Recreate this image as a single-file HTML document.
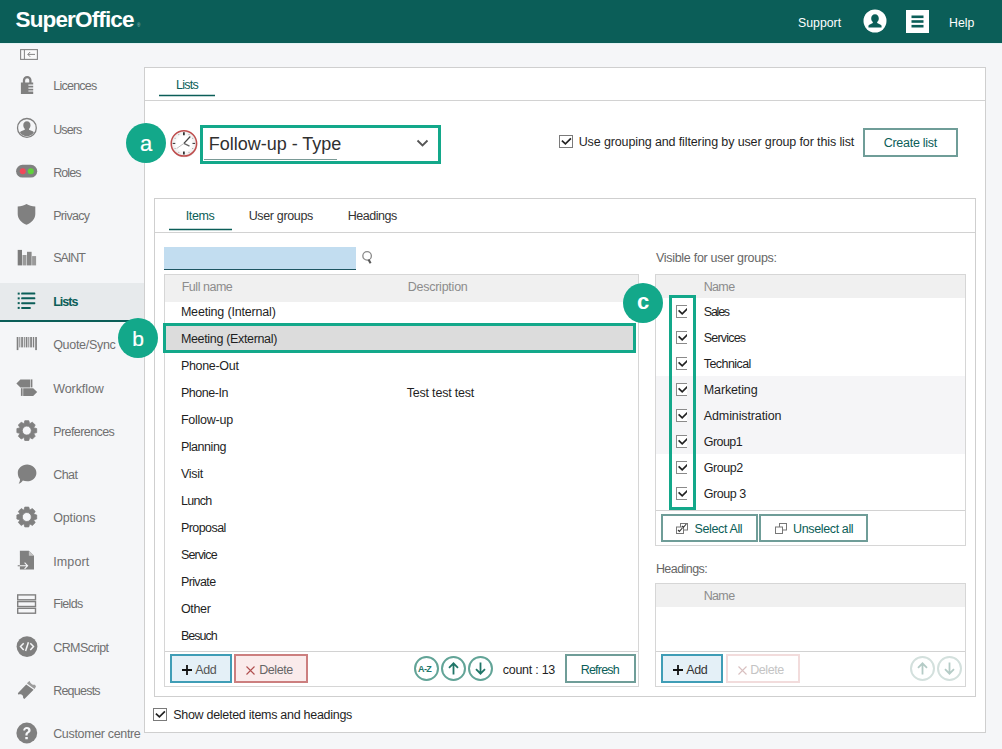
<!DOCTYPE html>
<html><head><meta charset="utf-8"><title>SuperOffice</title>
<style>
*{box-sizing:border-box;margin:0;padding:0}
html,body{width:1002px;height:749px;overflow:hidden;background:#f5f6f8;font-family:"Liberation Sans",sans-serif;font-size:12px;color:#1f1f1f}
div,span,svg{position:absolute}
.t{white-space:nowrap;line-height:16px;font-size:12px}
#hdr{left:0;top:0;width:1002px;height:43px;background:#0b5e58}
#logo{left:15.5px;top:7px;color:#fff;font-size:22.5px;font-weight:bold;line-height:26px;white-space:nowrap;letter-spacing:-.85px}
.hl{color:#fff}
.nav{left:53px;color:#707070}
#sel{left:0;top:283px;width:144px;height:39px;background:#e7eaec;border-bottom:2px solid #0b5e58}
#main{left:144px;top:67px;width:842px;height:666px;background:#fff;border:1px solid #cfcfcf}
.hline{height:1px;background:#d2d2d2}
.ul{height:3px;background:linear-gradient(to bottom,rgba(11,94,88,.25) 0,rgba(11,94,88,.25) 1px,#0b5e58 1px,#0b5e58 2px,rgba(11,94,88,.25) 2px,rgba(11,94,88,.25) 3px)}
#inner{left:154px;top:198px;width:822px;height:499px;background:#fff;border:1px solid #cfcfcf}
.tbl{border:1px solid #d6d6d6;background:#fff}
.th{left:0;top:0;height:23px;background:#f0f0f0}
.thx{color:#8c8c8c}
.btn{border:2px solid #6f9d98;background:#fff;color:#0b5e58}
.cb{width:14px;height:13px;border:1px solid #7a7a7a;background:#fff}
.cb2{width:11px;height:13px;border:1px solid #8a8a8a;border-right:none;background:#fff;overflow:hidden}
.badge{width:40px;height:40px;border-radius:20px;background:#13a88a;color:#fff;text-align:center}
.circ{width:25px;height:25px;border-radius:13px;border:2px solid #62a497;background:#fff}
</style></head><body>
<div style="left:0;top:43px;width:1002px;height:1px;background:#e4f3f4"></div><div id="hdr"><div id="logo">SuperOffice</div><span style="left:137px;top:23px;font-size:4.500px;line-height:5px;color:#9cc4c0">&#174;</span><span class="t hl" style="left:798px;top:15px;font-size:12.300px">Support</span><svg style="left:863px;top:9px" width="24" height="24" viewBox="0 0 24 24"><circle cx="12" cy="12" r="11.500" fill="#fff"/><path fill="#0b5e58" transform="translate(12 12.300) scale(1.150) translate(-12 -11.500)" d="M12 5.300c2 0 3.300 1.500 3.300 3.600 0 1.400-.5 2.600-1.400 3.300v.8l3 1.400c.5.200.8.600.8 1.100v1.300H6.300v-1.300c0-.5.300-.9.800-1.100l3-1.400v-.8c-.9-.7-1.400-1.900-1.400-3.300 0-2.100 1.300-3.600 3.300-3.600z"/></svg><svg style="left:906px;top:10px" width="23" height="23" viewBox="0 0 23 23"><rect width="23" height="23" fill="#fff"/><rect x="5.500" y="5.500" width="12" height="2.600" fill="#0b5e58"/><rect x="5.500" y="10.200" width="12" height="2.600" fill="#0b5e58"/><rect x="5.500" y="14.900" width="12" height="2.600" fill="#0b5e58"/></svg><span class="t hl" style="left:949px;top:15px;font-size:12.300px">Help</span></div>
<div id="sel"></div><svg style="left:20px;top:49px" width="18" height="11" viewBox="0 0 18 11"><rect x=".6" y=".6" width="16.800" height="9.800" fill="#fafafa" stroke="#858585" stroke-width="1.100"/><path d="M4.400 .6v9.800M7.800 5.400H15M10.200 3L7.800 5.400l2.400 2.400" fill="none" stroke="#858585" stroke-width="1"/></svg>
<svg style="left:16px;top:74px" width="22" height="22" viewBox="0 0 22 22"><path fill="none" stroke="#808080" stroke-width="2.300" d="M8 9V6.300a3.200 3.200 0 016.400 0V9"/><path fill="#808080" d="M4.900 8.500h12.300v2.100h-4.800v1.200h4.800v1.700h-4.800v1.200h4.800v1.700h-4.800v1.200h4.800V20H4.900z"/></svg><span class="t " style="left:53.2px;top:78px;font-size:12.5px;letter-spacing:-0.747px;color:#707070">Licences</span>
<svg style="left:16px;top:117px" width="22" height="22" viewBox="0 0 22 22"><circle cx="10.900" cy="10.900" r="9.400" fill="none" stroke="#808080" stroke-width="1.300"/><path fill="#808080" d="M10.900 4.300c2.300 0 3.600 1.700 3.600 3.900 0 1.500-.6 2.800-1.500 3.600v.9l3.700 1.600c.6.300 1 .8 1.100 1.400a8.600 8.600 0 01-13.800 0c.1-.6.500-1.100 1.100-1.400l3.700-1.600v-.9c-.9-.8-1.500-2.100-1.500-3.600 0-2.200 1.300-3.900 3.600-3.900z"/></svg><span class="t " style="left:53.2px;top:122px;font-size:12.5px;letter-spacing:-0.885px;color:#707070">Users</span>
<svg style="left:16px;top:160px" width="22" height="22" viewBox="0 0 22 22"><rect x=".1" y="4.800" width="21.100" height="12.700" rx="6.350" fill="#808080"/><circle cx="6.800" cy="11.200" r="3" fill="#f0485a"/><circle cx="14.800" cy="11.200" r="3" fill="#5fd33b"/></svg><span class="t " style="left:53.2px;top:165px;font-size:12.5px;letter-spacing:-0.914px;color:#707070">Roles</span>
<svg style="left:16px;top:204px" width="22" height="22" viewBox="0 0 22 22"><path fill="#808080" d="M10.500 0c2.600 1.700 5.400 2.400 8.800 2.600v7.400c0 4.900-3.800 8.800-8.800 10.800-5-2-8.800-5.900-8.800-10.800V2.600C5.100 2.400 7.900 1.700 10.500 0z"/></svg><span class="t " style="left:53.2px;top:208px;font-size:12.5px;letter-spacing:-0.680px;color:#707070">Privacy</span>
<svg style="left:16px;top:247px" width="22" height="22" viewBox="0 0 22 22"><rect x="1.700" y="2.900" width="4.300" height="15.500" fill="#7c7c7c"/><rect x="6.500" y="8" width="4" height="10.400" fill="#9a9a9a"/><rect x="11" y="4.800" width="4.600" height="13.600" fill="#888"/><rect x="16.100" y="9.100" width="4" height="9.300" fill="#9a9a9a"/></svg><span class="t " style="left:53.2px;top:250px;font-size:12.5px;letter-spacing:-1.053px;color:#707070">SAINT</span>
<svg style="left:16px;top:290px" width="22" height="22" viewBox="0 0 22 22"><g fill="#0b5e58"><rect x="1.700" y="2.600" width="2" height="2"/><rect x="5.200" y="2.600" width="14.100" height="2" rx=".6"/><rect x="1.700" y="7.370" width="2" height="2"/><rect x="5.200" y="7.370" width="14.100" height="2" rx=".6"/><rect x="1.700" y="12.140" width="2" height="2"/><rect x="5.200" y="12.140" width="14.100" height="2" rx=".6"/><rect x="1.700" y="16.900" width="2" height="2"/><rect x="5.200" y="16.900" width="9.600" height="2" rx=".6"/></g></svg><span class="t " style="left:53.2px;top:294px;font-size:12.5px;letter-spacing:-0.968px;color:#0b5e58;font-weight:bold">Lists</span>
<svg style="left:16px;top:333px" width="22" height="22" viewBox="0 0 22 22"><g fill="#808080"><rect x=".7" y="4" width="1.700" height="13.100"/><rect x="3.300" y="4" width="1" height="10.400"/><rect x="5.200" y="4" width="1.700" height="10.400"/><rect x="7.800" y="4" width="1" height="10.400"/><rect x="9.700" y="4" width="1.700" height="10.400"/><rect x="12.300" y="4" width="1" height="10.400"/><rect x="14.200" y="4" width="1.700" height="10.400"/><rect x="16.800" y="4" width="1.400" height="10.400"/><rect x="19.200" y="4" width="1.700" height="13.100"/></g></svg><span class="t " style="left:53.2px;top:337px;font-size:12.5px;letter-spacing:-0.301px;color:#707070">Quote/Sync</span>
<svg style="left:16px;top:377px" width="22" height="22" viewBox="0 0 22 22"><g fill="#808080"><path d="M.4 6.400l4-4h9.700v8H4.400z"/><path d="M14.700 2.400h1.700v8h-1.700z"/><path d="M4.900 11.200h1.700v7.700H4.900z"/><path d="M7.200 11.200h10l4 3.850-4 3.850h-10z"/></g></svg><span class="t " style="left:53.2px;top:381px;font-size:12.5px;letter-spacing:-0.081px;color:#707070">Workflow</span>
<svg style="left:16px;top:420px" width="22" height="22" viewBox="0 0 22 22"><path fill="#808080" fill-rule="evenodd" stroke="#808080" stroke-width=".8" stroke-linejoin="round" d="M8.09 3.39 L8.79 0.70 L12.81 0.70 L13.51 3.39 L13.98 3.59 L16.38 2.18 L19.22 5.02 L17.81 7.42 L18.01 7.89 L20.70 8.59 L20.70 12.61 L18.01 13.31 L17.81 13.78 L19.22 16.18 L16.38 19.02 L13.98 17.61 L13.51 17.81 L12.81 20.50 L8.79 20.50 L8.09 17.81 L7.62 17.61 L5.22 19.02 L2.38 16.18 L3.79 13.78 L3.59 13.31 L0.90 12.61 L0.90 8.59 L3.59 7.89 L3.79 7.42 L2.38 5.02 L5.22 2.18 L7.62 3.59Z M6.30 10.60a4.50 4.50 0 1 0 9.00 0a4.50 4.50 0 1 0 -9.00 0Z"/></svg><span class="t " style="left:53.2px;top:424px;font-size:12.5px;letter-spacing:-0.579px;color:#707070">Preferences</span>
<svg style="left:16px;top:463px" width="22" height="22" viewBox="0 0 22 22"><path fill="#808080" d="M11.100 1.600c5.100 0 9.300 3.700 9.300 8.300s-4.200 8.300-9.300 8.300c-1.500 0-2.900-.3-4.200-.8-1 1.600-2.400 2.700-4.200 3.400.9-1.400 1.400-3 1.300-4.700C2.600 14.600 1.800 12.300 1.800 9.900c0-4.600 4.200-8.300 9.300-8.300z"/></svg><span class="t " style="left:53.2px;top:467px;font-size:12.5px;letter-spacing:-0.534px;color:#707070">Chat</span>
<svg style="left:16px;top:506px" width="22" height="22" viewBox="0 0 22 22"><path fill="#808080" fill-rule="evenodd" stroke="#808080" stroke-width=".8" stroke-linejoin="round" d="M8.09 3.79 L8.79 1.10 L12.81 1.10 L13.51 3.79 L13.98 3.99 L16.38 2.58 L19.22 5.42 L17.81 7.82 L18.01 8.29 L20.70 8.99 L20.70 13.01 L18.01 13.71 L17.81 14.18 L19.22 16.58 L16.38 19.42 L13.98 18.01 L13.51 18.21 L12.81 20.90 L8.79 20.90 L8.09 18.21 L7.62 18.01 L5.22 19.42 L2.38 16.58 L3.79 14.18 L3.59 13.71 L0.90 13.01 L0.90 8.99 L3.59 8.29 L3.79 7.82 L2.38 5.42 L5.22 2.58 L7.62 3.99Z M6.30 11.00a4.50 4.50 0 1 0 9.00 0a4.50 4.50 0 1 0 -9.00 0Z"/></svg><span class="t " style="left:53.2px;top:510px;font-size:12.5px;letter-spacing:-0.129px;color:#707070">Options</span>
<svg style="left:16px;top:550px" width="22" height="22" viewBox="0 0 22 22"><path fill="#808080" d="M3.900 .7h9l5.100 5.100v13.600H3.900z"/><path fill="#c4c4c4" d="M12.900 .7v5.100H18z"/><path fill="#808080" d="M1.700 15.200h2.200v1.100H1.700z"/><path fill="none" stroke="#f5f6f8" stroke-width="1.100" d="M3.900 15.750h7.300M8.600 12.700l3 3.050-3 3.050"/></svg><span class="t " style="left:53.2px;top:554px;font-size:12.5px;letter-spacing:0.136px;color:#707070">Import</span>
<svg style="left:16px;top:593px" width="22" height="22" viewBox="0 0 22 22"><g fill="none" stroke="#808080" stroke-width="1.400"><rect x="1.700" y="1.900" width="17.800" height="4.900"/><rect x="1.700" y="8.600" width="17.800" height="4.900"/><rect x="1.700" y="15.300" width="17.800" height="4.900"/></g></svg><span class="t " style="left:53.2px;top:596px;font-size:12.5px;letter-spacing:-0.648px;color:#707070">Fields</span>
<svg style="left:16px;top:636px" width="22" height="22" viewBox="0 0 22 22"><circle cx="11" cy="10.600" r="10.400" fill="#808080"/><g fill="none" stroke="#f5f6f8" stroke-width="1.500"><path d="M7.700 7.200L4.500 10.600l3.200 3.400"/><path d="M14.300 7.200l3.200 3.400-3.200 3.400"/><path d="M12.400 6.200L9.600 15"/></g></svg><span class="t " style="left:53.2px;top:640px;font-size:12.5px;letter-spacing:-0.565px;color:#707070">CRMScript</span>
<svg style="left:16px;top:679px" width="22" height="22" viewBox="0 0 22 22"><path fill="#808080" d="M1.800 14.200L10.200 5.400l7.400 5.400L8.400 20l-1.300-1c.3-1.300-.2-2.500-1.300-3.200-1.100-.6-2.300-.6-3.200 0z"/><path fill="#9c9c9c" d="M11 4.600l1-1.600 1.800-1c.2 1.300.8 2.200 1.800 2.900 1 .7 2.100 1 3.400.8l1 1.900-1.500 2.400z"/></svg><span class="t " style="left:53.2px;top:683px;font-size:12.5px;letter-spacing:-0.772px;color:#707070">Requests</span>
<svg style="left:16px;top:722px" width="22" height="22" viewBox="0 0 22 22"><circle cx="10.800" cy="11" r="10.400" fill="#808080"/><path fill="#f5f6f8" d="M7.200 8.500c.1-2.200 1.600-3.400 3.700-3.400 2.100 0 3.700 1.200 3.700 3.100 0 1.400-.7 2.200-1.800 2.900-.9.600-1.200 1.100-1.200 2v.5H9.400v-.7c0-1.400.4-2.100 1.500-2.800.9-.6 1.300-1.100 1.300-1.800 0-.8-.6-1.400-1.500-1.400-1 0-1.600.6-1.600 1.600zM9.300 14.900h2.500v2.400H9.300z"/></svg><span class="t " style="left:53.2px;top:726px;font-size:12.5px;letter-spacing:-0.342px;color:#707070">Customer centre</span>
<div id="main"></div><span class="t " style="left:176.1px;top:77px;font-size:12.5px;letter-spacing:-0.750px;color:#0b5e58">Lists</span><div class="ul" style="left:159px;top:94px;width:56px"></div><div class="hline" style="left:145px;top:100px;width:840px"></div>
<div class="badge" style="left:126px;top:123px;font-size:22px;line-height:42px;-webkit-text-stroke:.2px #fff">a</div><svg style="left:168px;top:128px" width="31" height="31" viewBox="0 0 31 31"><defs><radialGradient id="cg"><stop offset="0.55" stop-color="#fff"/><stop offset="1" stop-color="#e9e9e9"/></radialGradient></defs><circle cx="16.2" cy="16.1" r="13.200" fill="#c9b4b4" opacity=".45"/><circle cx="15.9" cy="15.4" r="12.700" fill="url(#cg)" stroke="#bf4d4d" stroke-width="1.500"/><circle cx="24.7" cy="20.5" r=".55" fill="#999"/><circle cx="21.0" cy="24.2" r=".55" fill="#999"/><circle cx="10.8" cy="24.2" r=".55" fill="#999"/><circle cx="7.1" cy="20.5" r=".55" fill="#999"/><circle cx="7.1" cy="10.3" r=".55" fill="#999"/><circle cx="10.8" cy="6.6" r=".55" fill="#999"/><circle cx="21.0" cy="6.6" r=".55" fill="#999"/><circle cx="24.7" cy="10.3" r=".55" fill="#999"/><path d="M15.9 4.2v3M15.9 23.6v3" stroke="#111" stroke-width="1.500"/><path d="M4.7 15.4h2.600M24.5 15.4h2.600" stroke="#333" stroke-width="1"/><path d="M15.9 15.4l6.400-6.900" stroke="#444" stroke-width="1.300" fill="none"/><path d="M15.9 15.4l5.600 2.700" stroke="#666" stroke-width="1.300" fill="none"/><path d="M15.9 15.4l-7.200 5.100" stroke="#b5b5b5" stroke-width=".9" fill="none"/></svg><div style="left:200px;top:125px;width:241px;height:39px;border:3px solid #13a88a;background:#fff"></div><span class="t" style="left:208.8px;top:133px;font-size:18px;line-height:22px;color:#303030;letter-spacing:-.02px">Follow-up - Type</span><div style="left:204px;top:159px;width:133px;height:1px;background:#7a9a96"></div><svg style="left:416px;top:139px" width="13" height="9" viewBox="0 0 13 9"><path d="M1.500 1.500l5 5 5-5" fill="none" stroke="#555" stroke-width="1.800"/></svg>
<div class="cb" style="left:559px;top:135px"><svg style="left:-1px;top:-1px" width="14" height="13" viewBox="0 0 14 13"><path d="M2.900 5.600l3.500 3.300L11.900 3.400" fill="none" stroke="#222" stroke-width="1.700"/></svg></div><span class="t " style="left:578.7px;top:134px;font-size:12.5px;letter-spacing:-0.122px">Use grouping and filtering by user group for this list</span><div class="btn" style="left:863px;top:128px;width:95px;height:29px"></div><span class="t " style="left:883.7px;top:135px;font-size:12.5px;letter-spacing:-0.267px;color:#0b5e58">Create list</span>
<div id="inner"></div><span class="t " style="left:185.7px;top:208px;font-size:12.5px;letter-spacing:-0.365px;color:#0b5e58">Items</span><div class="ul" style="left:169px;top:228px;width:63px"></div><span class="t " style="left:248.7px;top:208px;font-size:12.5px;letter-spacing:-0.348px;color:#333">User groups</span><span class="t " style="left:347.7px;top:208px;font-size:12.5px;letter-spacing:-0.459px;color:#333">Headings</span><div class="hline" style="left:155px;top:232px;width:820px"></div>
<div style="left:164px;top:247px;width:192px;height:23px;background:#c2ddf0;border-bottom:1px solid #1d5562"></div><svg style="left:361px;top:251px" width="12" height="14" viewBox="0 0 12 14"><circle cx="6.100" cy="4.900" r="4.250" fill="none" stroke="#8a8a8a" stroke-width="1.300"/><path d="M7.500 8.500l2.100 3.800" stroke="#5a5a5a" stroke-width="2.100" fill="none"/></svg>
<div class="tbl" style="left:164px;top:274px;width:475px;height:413px"><div class="th" style="width:473px;height:27px"></div><div class="hline" style="left:0;top:376px;width:473px"></div></div><span class="t thx" style="left:181.7px;top:279px;font-size:12.5px;letter-spacing:-0.472px">Full name</span><span class="t thx" style="left:407.7px;top:279px;font-size:12.5px;letter-spacing:-0.242px">Description</span>
<div style="left:163px;top:323px;width:473px;height:30px;background:#dcdcdc;border:3px solid #13a88a"></div><span class="t " style="left:180.9px;top:304px;font-size:12.5px;letter-spacing:-0.180px">Meeting (Internal)</span><span class="t " style="left:180.9px;top:331px;font-size:12.5px;letter-spacing:-0.336px">Meeting (External)</span><span class="t " style="left:180.9px;top:358px;font-size:12.5px;letter-spacing:-0.306px">Phone-Out</span><span class="t " style="left:180.9px;top:385px;font-size:12.5px;letter-spacing:-0.461px">Phone-In</span><span class="t " style="left:180.9px;top:412px;font-size:12.5px;letter-spacing:-0.235px">Follow-up</span><span class="t " style="left:180.9px;top:439px;font-size:12.5px;letter-spacing:-0.450px">Planning</span><span class="t " style="left:180.9px;top:466px;font-size:12.5px;letter-spacing:-0.272px">Visit</span><span class="t " style="left:180.9px;top:493px;font-size:12.5px;letter-spacing:-0.689px">Lunch</span><span class="t " style="left:180.9px;top:520px;font-size:12.5px;letter-spacing:-0.547px">Proposal</span><span class="t " style="left:180.9px;top:547px;font-size:12.5px;letter-spacing:-0.813px">Service</span><span class="t " style="left:180.9px;top:574px;font-size:12.5px;letter-spacing:-0.600px">Private</span><span class="t " style="left:180.9px;top:601px;font-size:12.5px;letter-spacing:-0.315px">Other</span><span class="t " style="left:180.9px;top:628px;font-size:12.5px;letter-spacing:-0.978px">Besuch</span><span class="t " style="left:406.7px;top:385px;font-size:12.5px;letter-spacing:-0.197px">Test test test</span>
<div class="badge" style="left:118px;top:318px;font-size:21px;line-height:41px;-webkit-text-stroke:.2px #fff">b</div>
<div style="left:170px;top:654px;width:62px;height:29px;border:2px solid #3f9db6;background:#e4f0f7"></div><svg style="left:182px;top:665px" width="10" height="10" viewBox="0 0 10 10"><path d="M5 0v10M0 5h10" stroke="#111" stroke-width="1.800"/></svg><span class="t " style="left:195.2px;top:662px;font-size:12.5px;letter-spacing:-0.320px;color:#555">Add</span><div style="left:234px;top:654px;width:74px;height:29px;border:2px solid #cc7f7f;background:#faebeb"></div><svg style="left:246px;top:666px" width="9" height="9" viewBox="0 0 9 9"><path d="M.5 .5l8 8M8.500 .5l-8 8" stroke="#b05050" stroke-width="1.100"/></svg><span class="t " style="left:259.2px;top:662px;font-size:12.5px;letter-spacing:-0.406px;color:#666">Delete</span>
<div class="circ" style="left:414px;top:656px"><span style="left:3px;top:5px;font-size:9px;font-weight:bold;color:#22776a;line-height:10px;letter-spacing:-.6px;left:2px;top:5.5px">A-Z</span></div><div class="circ" style="left:441px;top:656px"><svg style="left:5px;top:4px" width="11" height="13" viewBox="0 0 11 13"><path d="M5.500 12.500V1.500M1 5.800L5.500 1.300 10 5.800" fill="none" stroke="#1f7567" stroke-width="1.800"/></svg></div><div class="circ" style="left:468px;top:656px"><svg style="left:5px;top:4px" width="11" height="13" viewBox="0 0 11 13"><path d="M5.500 .5v11M1 7.200l4.500 4.500L10 7.200" fill="none" stroke="#1f7567" stroke-width="1.800"/></svg></div><span class="t " style="left:502.7px;top:662px;font-size:12.5px;letter-spacing:-0.255px">count : 13</span><div class="btn" style="left:565px;top:654px;width:71px;height:29px"></div><span class="t " style="left:580.7px;top:662px;font-size:12.5px;letter-spacing:-0.778px;color:#0b5e58">Refresh</span>
<span class="t " style="left:655.9px;top:250px;font-size:12.5px;letter-spacing:-0.283px;color:#666">Visible for user groups:</span><div class="tbl" style="left:655px;top:274px;width:311px;height:272px"><div class="th" style="width:309px"></div><div style="left:0;top:101px;width:309px;height:78px;background:#f5f5f7"></div><div class="hline" style="left:0;top:235px;width:309px"></div></div><span class="t thx" style="left:703.7px;top:279px;font-size:12.5px;letter-spacing:-0.647px">Name</span>
<div class="cb2" style="left:676px;top:305px"><svg style="left:-1px;top:-1px" width="11" height="13" viewBox="0 0 11 13"><path d="M2.600 5.300l3.600 3.500L11.500 3.500" fill="none" stroke="#222" stroke-width="1.700"/></svg></div><span class="t " style="left:703.8px;top:304px;font-size:12.5px;letter-spacing:-1.242px">Sales</span><div class="cb2" style="left:676px;top:331px"><svg style="left:-1px;top:-1px" width="11" height="13" viewBox="0 0 11 13"><path d="M2.600 5.300l3.600 3.500L11.500 3.500" fill="none" stroke="#222" stroke-width="1.700"/></svg></div><span class="t " style="left:703.8px;top:330px;font-size:12.5px;letter-spacing:-0.804px">Services</span><div class="cb2" style="left:676px;top:357px"><svg style="left:-1px;top:-1px" width="11" height="13" viewBox="0 0 11 13"><path d="M2.600 5.300l3.600 3.500L11.500 3.500" fill="none" stroke="#222" stroke-width="1.700"/></svg></div><span class="t " style="left:703.8px;top:356px;font-size:12.5px;letter-spacing:-0.576px">Technical</span><div class="cb2" style="left:676px;top:383px"><svg style="left:-1px;top:-1px" width="11" height="13" viewBox="0 0 11 13"><path d="M2.600 5.300l3.600 3.500L11.500 3.500" fill="none" stroke="#222" stroke-width="1.700"/></svg></div><span class="t " style="left:703.8px;top:382px;font-size:12.5px;letter-spacing:-0.135px">Marketing</span><div class="cb2" style="left:676px;top:409px"><svg style="left:-1px;top:-1px" width="11" height="13" viewBox="0 0 11 13"><path d="M2.600 5.300l3.600 3.500L11.500 3.500" fill="none" stroke="#222" stroke-width="1.700"/></svg></div><span class="t " style="left:703.8px;top:408px;font-size:12.5px;letter-spacing:-0.115px">Administration</span><div class="cb2" style="left:676px;top:435px"><svg style="left:-1px;top:-1px" width="11" height="13" viewBox="0 0 11 13"><path d="M2.600 5.300l3.600 3.500L11.500 3.500" fill="none" stroke="#222" stroke-width="1.700"/></svg></div><span class="t " style="left:703.8px;top:434px;font-size:12.5px;letter-spacing:-0.578px">Group1</span><div class="cb2" style="left:676px;top:461px"><svg style="left:-1px;top:-1px" width="11" height="13" viewBox="0 0 11 13"><path d="M2.600 5.300l3.600 3.500L11.500 3.500" fill="none" stroke="#222" stroke-width="1.700"/></svg></div><span class="t " style="left:703.8px;top:460px;font-size:12.5px;letter-spacing:-0.478px">Group2</span><div class="cb2" style="left:676px;top:487px"><svg style="left:-1px;top:-1px" width="11" height="13" viewBox="0 0 11 13"><path d="M2.600 5.300l3.600 3.500L11.500 3.500" fill="none" stroke="#222" stroke-width="1.700"/></svg></div><span class="t " style="left:703.8px;top:486px;font-size:12.5px;letter-spacing:-0.444px">Group 3</span>
<div style="left:669px;top:295px;width:27px;height:215px;border:3px solid #13a88a"></div><div class="badge" style="left:623px;top:283px;font-size:22px;line-height:38px;font-weight:bold">c</div>
<div class="btn" style="left:661px;top:514px;width:97px;height:28px"></div><svg style="left:676px;top:523px" width="12" height="11" viewBox="0 0 12 11"><rect x="4.500" y=".5" width="7" height="6.500" fill="#fff" stroke="#777"/><rect x=".5" y="4" width="7" height="6.500" fill="#fff" stroke="#777"/><path d="M6.200 3l1.300 1.300 2.800-3.300M2 7l1.400 1.400 3-3.400" fill="none" stroke="#333" stroke-width="1.100"/></svg><span class="t " style="left:694.6px;top:521px;font-size:12.5px;letter-spacing:-0.380px;color:#0b5e58">Select All</span><div class="btn" style="left:759px;top:514px;width:109px;height:28px"></div><svg style="left:775px;top:523px" width="12" height="11" viewBox="0 0 12 11"><rect x="4.500" y=".5" width="7" height="6.500" fill="#fff" stroke="#777"/><rect x=".5" y="4" width="7" height="6.500" fill="#fff" stroke="#777"/></svg><span class="t " style="left:793.1px;top:521px;font-size:12.5px;letter-spacing:-0.374px;color:#0b5e58">Unselect all</span>
<span class="t " style="left:655.9px;top:561px;font-size:12.5px;letter-spacing:-0.548px;color:#666">Headings:</span><div class="tbl" style="left:655px;top:583px;width:311px;height:104px"><div class="th" style="width:309px"></div><div class="hline" style="left:0;top:67px;width:309px"></div></div><span class="t thx" style="left:703.7px;top:588px;font-size:12.5px;letter-spacing:-0.647px">Name</span><div style="left:661px;top:654px;width:62px;height:29px;border:2px solid #3f9db6;background:#e4f0f7"></div><svg style="left:673px;top:665px" width="10" height="10" viewBox="0 0 10 10"><path d="M5 0v10M0 5h10" stroke="#111" stroke-width="1.800"/></svg><span class="t " style="left:686.2px;top:662px;font-size:12.5px;letter-spacing:-0.320px;color:#333">Add</span><div style="left:726px;top:654px;width:74px;height:29px;border:2px solid #f2dcdc;background:#fff"></div><svg style="left:738px;top:666px" width="9" height="9" viewBox="0 0 9 9"><path d="M.5 .5l8 8M8.500 .5l-8 8" stroke="#d9c0c0" stroke-width="1.100"/></svg><span class="t " style="left:750.2px;top:662px;font-size:12.5px;letter-spacing:-0.406px;color:#c4c4c4">Delete</span><div class="circ" style="left:910px;top:656px;border-color:#d3e0dd"><svg style="left:5px;top:4px" width="11" height="13" viewBox="0 0 11 13"><path d="M5.500 12.500V1.500M1 5.800L5.500 1.300 10 5.800" fill="none" stroke="#b4cbc6" stroke-width="1.800"/></svg></div><div class="circ" style="left:937px;top:656px;border-color:#d3e0dd"><svg style="left:5px;top:4px" width="11" height="13" viewBox="0 0 11 13"><path d="M5.500 .5v11M1 7.200l4.500 4.500L10 7.200" fill="none" stroke="#b4cbc6" stroke-width="1.800"/></svg></div>
<div class="cb" style="left:153px;top:708px"><svg style="left:-1px;top:-1px" width="14" height="13" viewBox="0 0 14 13"><path d="M2.900 5.600l3.500 3.300L11.900 3.400" fill="none" stroke="#222" stroke-width="1.700"/></svg></div><span class="t " style="left:173.2px;top:707px;font-size:12.5px;letter-spacing:-0.284px">Show deleted items and headings</span>
</body></html>
